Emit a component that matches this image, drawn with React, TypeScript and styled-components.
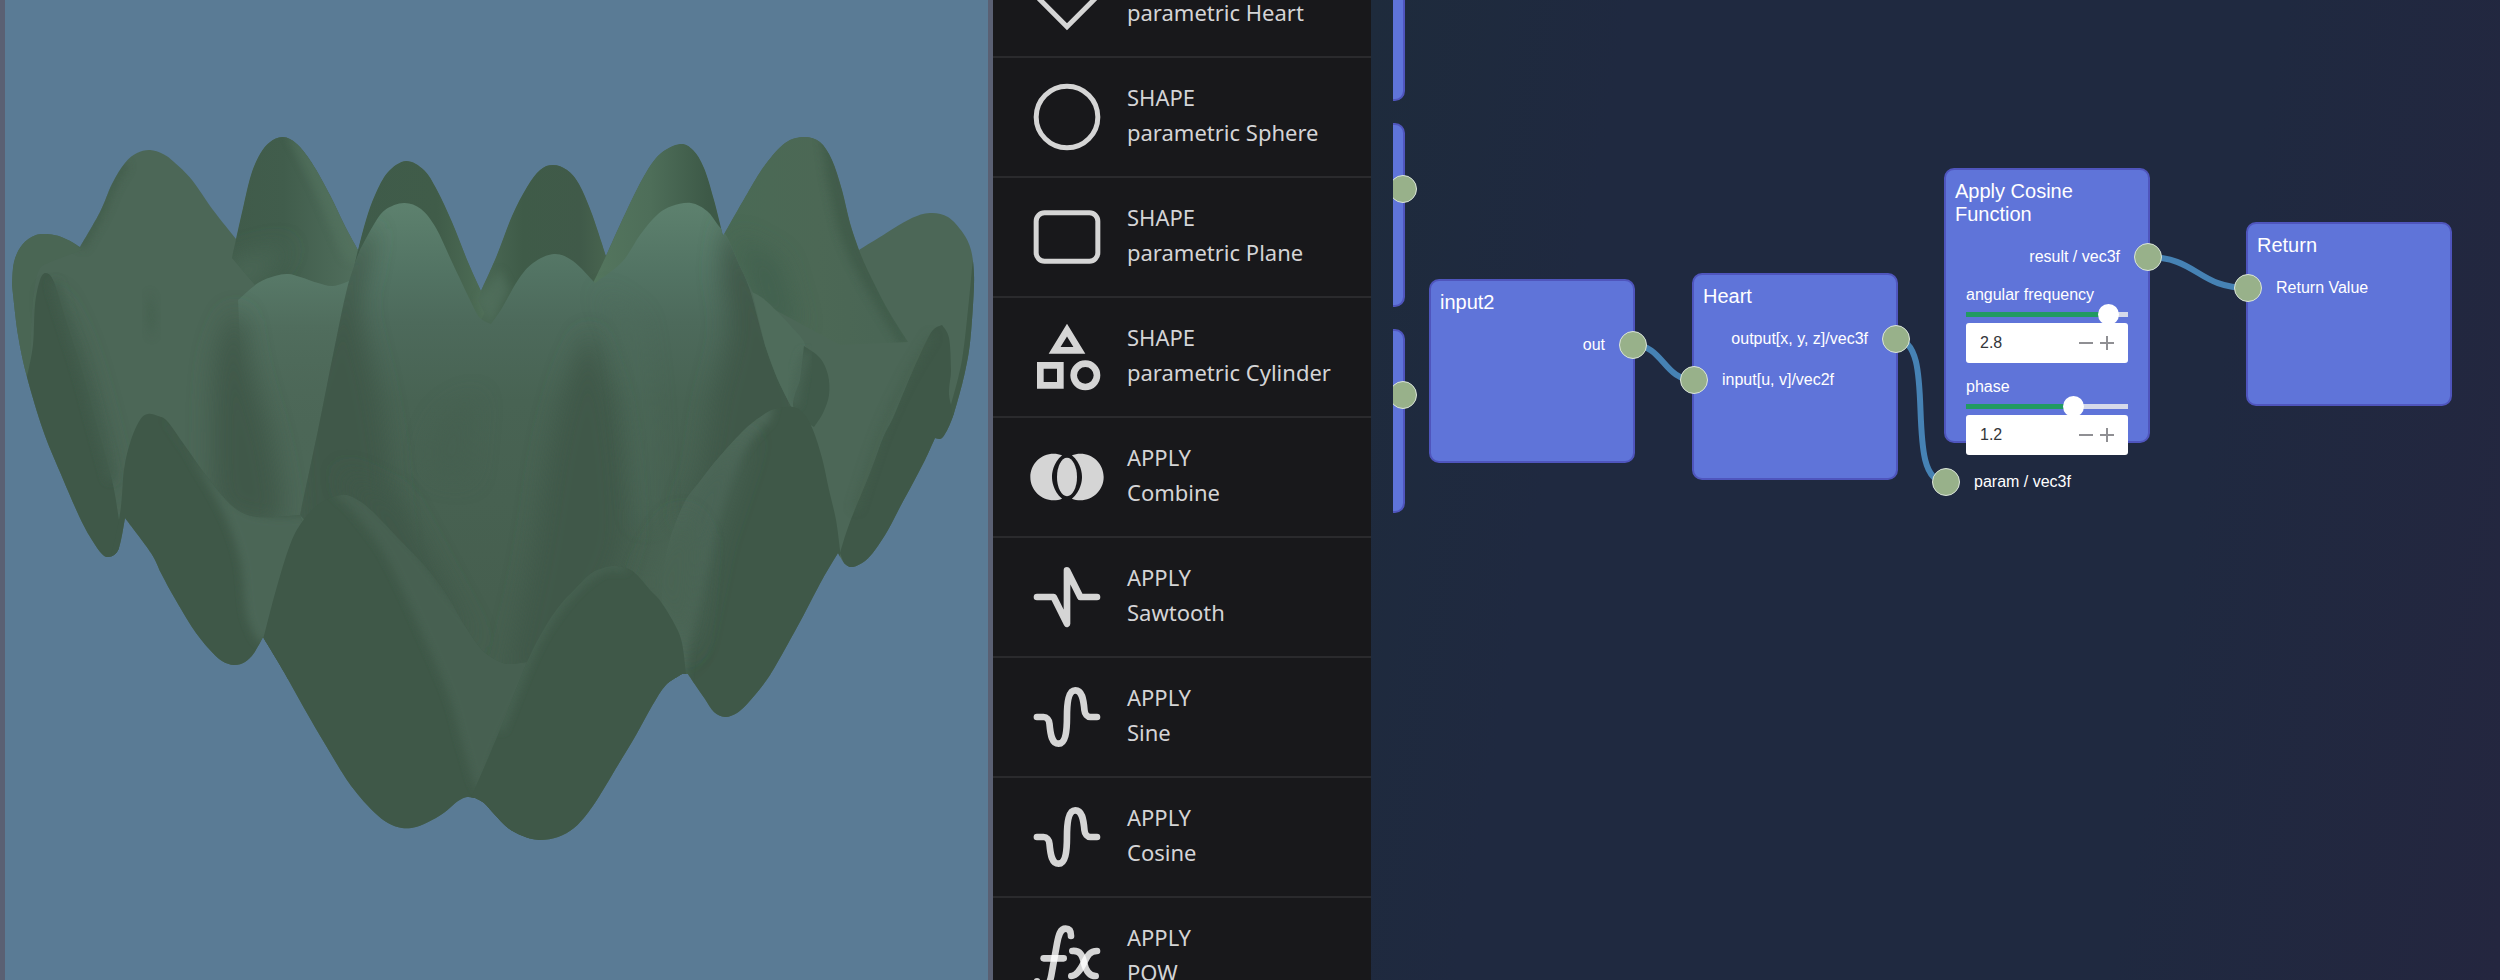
import React, { useState } from "react";
import styled, { createGlobalStyle } from "styled-components";

const GlobalStyle = createGlobalStyle`
  *, *::before, *::after { box-sizing: border-box; }
  body { margin: 0; background: #1e293e; }
`;

const Page = styled.main`
  display: grid;
  grid-template-columns: 993fr 378px 1129fr;
  height: 100vh;
  overflow: hidden;
`;

/* ---------- 3D preview ---------- */

const Preview = styled.section`
  min-width: 0;
  min-height: 0;
  border: solid #5a6073;
  border-width: 0 5px;
  background: #5a7b95;
`;

const Scene = styled.svg`
  display: block;
  width: 100%;
  height: 100%;
`;

type Point = [number, number];

/* Smooth curve through the points; "|" marks a sharp corner. */
function curve(text: string, closed = true): string {
  const runs = text.split("|").map((run) =>
    run
      .trim()
      .split(/\s+/)
      .map((p) => p.split(",").map(Number) as Point)
  );
  let d = "";
  runs.forEach((pts, r) => {
    d += `${r === 0 ? "M" : "L"}${pts[0][0]} ${pts[0][1]}`;
    for (let i = 0; i < pts.length - 1; i++) {
      const a = pts[Math.max(0, i - 1)];
      const b = pts[i];
      const c = pts[i + 1];
      const e = pts[Math.min(pts.length - 1, i + 2)];
      d += `C${b[0] + (c[0] - a[0]) / 6} ${b[1] + (c[1] - a[1]) / 6} ${c[0] - (e[0] - b[0]) / 6} ${
        c[1] - (e[1] - b[1]) / 6
      } ${c[0]} ${c[1]}`;
    }
  });
  return closed ? d + "Z" : d;
}

const outline = curve(
  "12,285 14,262 22,245 36,235 54,235 68,240 80,247 | 80,247 100,212 112,184 125,163 137,153 150,150 163,154 174,162 192,180 213,210 236,239 | " +
    "236,239 243,208 251,175 260,154 270,142 283,137 297,144 312,163 330,195 345,226 358,250 | 358,250 366,220 375,195 388,172 406,161 424,170 437,190 452,222 468,262 481,291 | " +
    "481,291 497,255 512,216 527,187 540,170 553,165 567,170 579,184 592,214 606,256 | 606,256 625,214 644,176 660,154 680,144 693,150 704,168 714,200 723,236 | " +
    "723,236 747,194 765,165 785,143 804,137 820,142 832,160 842,190 850,223 859,250 | 859,250 880,237 910,219 930,213 948,217 963,233 971,250 974,275 973,305 970,343 965,372 957,403 950,424 942,438 935,438 | " +
    "935,438 925,460 913,483 900,507 888,530 875,550 865,561 853,567 845,564 838,553 | 838,553 822,580 801,620 776,665 763,685 748,703 737,713 725,717 714,712 705,699 696,686 688,674 | 682,674 666,685 652,706 636,735 618,765 600,795 587,814 574,828 558,837 539,840 523,836 508,828 495,815 484,803 475,798 | " +
    "475,798 467,797 458,801 445,812 432,820 416,827 402,828 388,823 375,813 360,797 345,777 325,744 304,708 284,672 263,637 | 263,637 254,653 245,662 234,665 222,661 210,650 194,630 174,597 161,573 151,553 125,518 | " +
    "125,518 121,540 117,552 109,557 102,554 92,540 80,518 60,472 43,430 27,377 18,335 12,285"
);

function Flower() {
  return (
    <Scene viewBox="5 0 983 980" preserveAspectRatio="xMidYMid meet" role="img" aria-label="Rendered surface">
      <defs>
        <clipPath id="body"><path d={outline} /></clipPath>
        <clipPath id="front">
          <path d={curve("300,515 318,430 335,345 348,285 360,250 | 360,250 373,226 385,210 404,203 421,209 436,228 452,262 471,302 480,318 491,324 | 491,324 502,308 518,280 533,263 554,254 573,261 595,283 | 595,283 622,262 640,235 657,215 672,206 691,203 707,211 718,225 727,237 738,262 750,290 765,345 778,380 793,410 | 793,410 700,600 560,720 400,620 300,515")} />
        </clipPath>
        <clipPath id="petal1"><path d={curve("100,600 119,520 124,470 131,440 140,420 148,414 158,416 167,421 183,443 205,474 228,502 243,513 258,517 278,517 | 300,515 320,600 263,700 100,700")} /></clipPath>
        <clipPath id="petal2"><path d={curve("263,640 276,590 290,545 302,522 319,504 341,495 356,499 372,511 400,540 425,566 445,592 465,626 482,650 500,662 512,664 527,662 | 600,700 480,900 300,900")} /></clipPath>
        <clipPath id="petal3"><path d={curve("470,800 500,730 527,662 545,627 560,605 574,590 590,574 603,568 614,566 626,568 636,574 650,590 661,602 675,625 682,643 686,674 | 686,900 470,900")} /></clipPath>
        <clipPath id="petal4"><path d={curve("660,640 665,560 682,507 700,481 720,456 745,429 763,415 775,409 793,407 804,414 813,430 822,458 829,490 836,520 840,550 | 840,750 680,750")} /></clipPath>
        <clipPath id="peak2"><path d={curve("232,258 243,208 251,175 260,154 270,142 283,135 297,144 312,163 330,195 345,226 358,250 | 352,275 346,284 333,286 318,283 300,277 288,274 272,277 255,285")} /></clipPath>
        <clipPath id="peak5"><path d={curve("585,300 606,256 625,214 644,176 660,154 680,144 693,150 704,168 714,200 723,236 | 740,300 600,310")} /></clipPath>
        <clipPath id="peak6"><path d={curve("723,236 747,194 765,165 785,143 804,137 820,142 832,160 842,190 850,223 859,250 870,275 888,310 908,342 | 840,345 757,300")} /></clipPath>
        <linearGradient id="g2"><stop offset="0" stopColor="#405b4a" /><stop offset=".4" stopColor="#415d4c" /><stop offset="1" stopColor="#52705e" /></linearGradient>
        <linearGradient id="g3"><stop offset="0" stopColor="#3f5b4a" /><stop offset=".6" stopColor="#405c49" /><stop offset="1" stopColor="#517159" /></linearGradient>
        <linearGradient id="g4"><stop offset="0" stopColor="#4b6955" /><stop offset=".35" stopColor="#3f5b48" /><stop offset=".8" stopColor="#405a49" /><stop offset="1" stopColor="#48644f" /></linearGradient>
        <linearGradient id="g5"><stop offset="0" stopColor="#55775f" /><stop offset=".45" stopColor="#4e6e59" /><stop offset=".85" stopColor="#3d5947" /></linearGradient>
        <linearGradient id="g6"><stop offset="0" stopColor="#4a6a55" /><stop offset=".5" stopColor="#4c6855" /><stop offset=".8" stopColor="#4a6655" /></linearGradient>
        <linearGradient id="gf" x1="0" y1="203" x2="0" y2="600" gradientUnits="userSpaceOnUse">
          <stop offset="0" stopColor="#5d816e" /><stop offset=".18" stopColor="#527363" /><stop offset=".3" stopColor="#4d6a5b" /><stop offset=".5" stopColor="#486353" /><stop offset="1" stopColor="#465f4f" />
        </linearGradient>
        <linearGradient id="g7" x1="0" y1="270" x2="0" y2="460" gradientUnits="userSpaceOnUse">
          <stop offset="0" stopColor="#587a69" /><stop offset=".3" stopColor="#506d5d" /><stop offset="1" stopColor="#4b6555" stopOpacity="0" />
        </linearGradient>
        <filter id="soft" x="-50%" y="-50%" width="200%" height="200%"><feGaussianBlur stdDeviation="12" /></filter>
        <filter id="fine" x="-50%" y="-50%" width="200%" height="200%"><feGaussianBlur stdDeviation="4" /></filter>
      </defs>

      <g clipPath="url(#body)">
        <rect x="0" y="100" width="990" height="760" fill="#4c6757" />

        {/* back row of peaks */}
        <path d={curve("80,247 100,212 112,184 125,163", false)} stroke="#405b49" strokeWidth="10" fill="none" filter="url(#fine)" opacity=".7" />
        <path d={curve("10,290 16,255 36,232 62,235 82,250 | 50,262 38,272 32,310 28,377 10,350")} fill="#4a6654" />
        <g clipPath="url(#peak2)">
          <rect x="230" y="130" width="135" height="170" fill="url(#g2)" />
          <path d={curve("285,130 320,165 375,265 | 345,260 315,190")} fill="#547460" filter="url(#fine)" opacity=".6" />
          <path d="M225 262L290 245L240 300Z" fill="#4c6757" filter="url(#soft)" />
        </g>
        <path d={curve("350,285 358,250 366,220 375,195 388,172 406,161 424,170 437,190 452,222 468,262 481,291 | 495,330 350,330")} fill="url(#g3)" />
        <path d={curve("481,291 497,255 512,216 527,187 540,170 553,163 567,168 579,184 592,214 606,256 | 606,300 491,324 484,312 478,300")} fill="url(#g4)" />
        <path d="M478 300L500 270L510 290L491 325Z" fill="#577663" filter="url(#fine)" opacity=".5" />
        <g clipPath="url(#peak5)"><rect x="585" y="140" width="145" height="180" fill="url(#g5)" /></g>
        <g clipPath="url(#peak6)">
          <rect x="720" y="130" width="195" height="230" fill="url(#g6)" />
          <path d={curve("820,130 838,150 853,210 880,285 912,345 | 900,345 862,282 840,235 826,175")} fill="#3c5846" filter="url(#fine)" opacity=".7" />
          <path d="M735 235L780 260L800 330L760 320Z" fill="#415e4d" filter="url(#soft)" opacity=".7" />
        </g>

        {/* left flank */}
        <path d={curve("50,285 80,350 108,450 119,515 | 105,480 80,410")} fill="#3f5848" filter="url(#soft)" />
        <path d={curve("27,377 33,345 35,305 40,280 46,273 54,282 66,320 82,370 97,425 112,480 119,520 | 119,560 80,570 20,420")} fill="#3f5848" />
        <path d={curve("54,282 66,320 82,370 97,425 112,480", false)} stroke="#435d4d" strokeWidth="9" fill="none" filter="url(#fine)" />
        <path d={curve("150,290 147,315 152,340 | 156,315")} fill="#415b4a" filter="url(#fine)" opacity=".45" />

        {/* second petal from the left */}
        <path d={curve("238,300 258,283 275,276 288,274 300,277 318,283 333,286 352,280 | 352,300 320,450 245,450")} fill="url(#g7)" />
        <path d={curve("235,310 218,350 212,420 216,500 240,520 280,520 274,450 252,370 243,320")} fill="#3f5848" filter="url(#soft)" />

        {/* centre */}
        <g clipPath="url(#front)">
          <rect x="290" y="190" width="520" height="540" fill="url(#gf)" />
          <path d={curve("352,250 372,228 366,270 360,310 376,380 388,450 400,560 420,600 | 300,560 290,420")} fill="#3f5848" filter="url(#soft)" />
          <path d={curve("730,215 722,270 728,330 712,400 700,470 680,520 | 760,500 810,420 790,340")} fill="#3f5848" filter="url(#soft)" />
          <path d={curve("590,330 568,380 550,450 532,560 505,680 | 560,670 620,560 624,480 614,400")} fill="#3f5848" filter="url(#soft)" />
          <path d={curve("478,395 440,420 430,470 470,480")} fill="#455e4f" filter="url(#soft)" opacity=".5" />
          <path d="M340 470L400 500L480 650L400 580Z" fill="#3f5848" filter="url(#soft)" />
        </g>
        <path d={curve("600,290 622,340 632,420 640,520 | 655,520 650,400 640,320")} fill="#4f6d5d" filter="url(#soft)" opacity=".5" />

        {/* right folds */}
        <path d={curve("752,292 765,300 790,325 806,348 800,385 812,428 | 793,410 778,380 765,345")} fill="#4f6c5b" />
        <path d={curve("804,346 820,358 828,375 829,395 823,413 814,427 | 803,420 793,405 800,380")} fill="#405a4a" />
        <path d={curve("806,352 798,380 794,405", false)} stroke="#496554" strokeWidth="8" fill="none" filter="url(#fine)" />
        <path d={curve("942,325 934,329 927,340 914,368 903,394 893,418 883,438 870,473 850,522 840,553 | 850,580 980,470 951,405 951,370 949,338 942,325")} fill="#3f5848" />
        <path d={curve("978,230 973,260 969,300 962,360 951,405 | 955,445 990,400")} fill="#405a49" />
        <path d={curve("932,335 905,380 880,435 855,510", false)} stroke="#445e4e" strokeWidth="8" fill="none" filter="url(#fine)" opacity=".6" />

        {/* lower petals */}
        <g clipPath="url(#petal4)">
          <rect x="640" y="400" width="210" height="360" fill="#3f5848" />
          <path d={curve("640,640 660,540 720,440 775,400 | 770,420 745,450 722,500 705,570 690,640 684,690")} fill="#4d6858" filter="url(#fine)" />
          <path d={curve("680,530 700,480 750,435 | 715,540 690,660")} fill="#496454" filter="url(#soft)" />
        </g>
        <path d={curve("683,515 660,545 645,590 682,640 686,672 | 695,600 700,540")} fill="#496353" filter="url(#soft)" />
        <g clipPath="url(#petal1)">
          <rect x="100" y="400" width="230" height="300" fill="#3f5848" />
          <path d={curve("158,414 205,470 250,512 310,515 | 300,560 268,640 248,620 240,560 222,510 190,455")} fill="#4b6656" filter="url(#fine)" />
        </g>
        <g clipPath="url(#petal2)">
          <rect x="250" y="480" width="370" height="400" fill="#3f5848" />
          <path d={curve("330,490 360,494 410,545 470,620 520,655 | 540,660 500,740 480,790 464,750 450,700 425,640 385,555 350,508")} fill="#476151" filter="url(#fine)" />
        </g>
        <g clipPath="url(#petal3)">
          <rect x="460" y="560" width="240" height="300" fill="#3f5848" />
          <path d={curve("500,730 527,662 545,627 574,590 603,568 626,568", false)} stroke="#4a6554" strokeWidth="6" fill="none" filter="url(#fine)" />
        </g>
      </g>
    </Scene>
  );
}

/* ---------- node palette ---------- */

const Palette = styled.nav`
  min-height: 0;
  overflow: hidden;
  background: #18181b;
`;

/* scrolled part of the way down the list */
const PaletteList = styled.ul`
  list-style: none;
  margin: -62px 0 0;
  padding: 0;
`;

const PaletteItem = styled.button`
  display: flex;
  align-items: center;
  gap: 20px;
  width: 100%;
  height: 120px;
  padding: 0 0 0 34px;
  border: 0;
  border-bottom: 2px solid #2a2a2d;
  background: transparent;
  color: #d4d4d6;
  text-align: left;
  cursor: pointer;
`;

const ItemText = styled.span`
  display: flex;
  flex-direction: column;
  padding-bottom: 4px;
  font: 22px/35px "Noto Sans", "Segoe UI", sans-serif;
`;

const ItemIcon = styled.svg`
  flex: none;
  width: 80px;
  height: 80px;
  fill: none;
  stroke: rgba(255, 255, 255, 0.82);
  stroke-linecap: round;
  stroke-linejoin: round;
`;

const sine = (
  <path strokeWidth="2" d="M21 12h-2c-.894 0-1.662-.857-1.761-2-.296-3.45-.749-6-2.749-6s-2.5 3.582-2.5 8-.5 8-2.5 8-2.452-2.547-2.749-6c-.1-1.147-.867-2-1.763-2h-2" />
);

const solid = { fill: "rgba(255,255,255,0.82)", stroke: "none" };

const icons: Record<string, React.ReactNode> = {
  heart: <path strokeWidth="1.5" strokeLinejoin="miter" d="M12 20.9l-8-8a5.2 5.2 0 0 1 7.4-7.4l.6.6.6-.6a5.2 5.2 0 0 1 7.4 7.4z" />,
  circle: <circle cx="12" cy="12" r="9.25" strokeWidth="1.5" />,
  plane: <rect x="2.75" y="4.75" width="18.5" height="14.5" rx="2.5" strokeWidth="1.5" />,
  category: (
    <path {...solid} fillRule="evenodd" d="M12 2l-5.5 9h11L12 2zm0 3.84L13.93 9h-3.87L12 5.84zM17.5 13a4.5 4.5 0 1 0 0 9 4.5 4.5 0 0 0 0-9zm0 7a2.5 2.5 0 0 1 0-5 2.5 2.5 0 0 1 0 5zM3 21.5h8v-8H3v8zm2-6h4v4H5v-4z" />
  ),
  combine: (
    <g {...solid}>
      <ellipse cx="12" cy="12" rx="3" ry="5.74" />
      <path d="M7.5 12c0-.97.23-4.16 3.03-6.5C9.75 5.19 8.9 5 8 5c-3.86 0-7 3.14-7 7s3.14 7 7 7c.9 0 1.75-.19 2.53-.5C7.73 16.16 7.5 12.97 7.5 12zM16 5c-.9 0-1.75.19-2.53.5 2.8 2.34 3.03 5.53 3.03 6.5s-.23 4.16-3.03 6.5c.78.31 1.63.5 2.53.5 3.86 0 7-3.14 7-7s-3.14-7-7-7z" />
    </g>
  ),
  saw: <path strokeWidth="2" d="M3 12h5l4 8V4l4 8h5" />,
  sine,
  fx: (
    <g strokeWidth="2">
      <path d="M3 19.3C3 20.4 3.7 21 4.6 21 6.4 21 6.9 19.5 7.3 17.5L9 8C9.5 5.2 10 3.5 11.6 3.5 12.7 3.5 13.2 4.3 13.2 5.7" />
      <path d="M5 12.4h6" />
      <path d="M13.6 10.2C16 10 16.6 11.5 17.1 13.7S18.500 17.700 20.600 17.700" />
      <path d="M21 10.2C18.6 10.2 18 12 17.1 13.7S15 17.700 13.300 17.700" />
    </g>
  ),
};

const palette = [
  { kind: "SHAPE", name: "parametric Heart", icon: "heart" },
  { kind: "SHAPE", name: "parametric Sphere", icon: "circle" },
  { kind: "SHAPE", name: "parametric Plane", icon: "plane" },
  { kind: "SHAPE", name: "parametric Cylinder", icon: "category" },
  { kind: "APPLY", name: "Combine", icon: "combine" },
  { kind: "APPLY", name: "Sawtooth", icon: "saw" },
  { kind: "APPLY", name: "Sine", icon: "sine" },
  { kind: "APPLY", name: "Cosine", icon: "sine" },
  { kind: "APPLY", name: "POW", icon: "fx" },
];

/* ---------- graph editor ---------- */

const Editor = styled.section`
  display: flex;
  min-width: 0;
  padding-left: 22px;
  background: linear-gradient(100deg, #1e2b3c 0%, #1f2940 20%, #1f2940 70%, #24263f 100%);
`;

const Canvas = styled.div`
  position: relative;
  flex: 1;
  min-width: 0;
  overflow: hidden;
  font-family: "Liberation Sans", Arial, sans-serif;
`;

const Wires = styled.svg`
  position: absolute;
  inset: 0;
  width: 100%;
  height: 100%;
  fill: none;
  stroke: #4682b4;
  stroke-width: 6px;
`;

const NodeBox = styled.article<{ $x: number; $y: number; $h: number }>`
  position: absolute;
  left: ${(p) => p.$x}px;
  top: ${(p) => p.$y}px;
  width: 206px;
  height: ${(p) => p.$h}px;
  border: 2px solid #4f55bd;
  border-radius: 10px;
  background: #5f74d9;
  color: #fff;
`;

const NodeTitle = styled.h2`
  margin: 0;
  padding: 10px 9px;
  font-size: 20px;
  font-weight: 400;
  line-height: 23px;
`;

const Port = styled.div<{ $out?: boolean }>`
  display: flex;
  flex-direction: ${(p) => (p.$out ? "row-reverse" : "row")};
  align-items: center;
  gap: 14px;
  height: 41px;
  margin: 0 -14px;
  font-size: 16px;
  line-height: 20px;
`;

const Socket = styled.button`
  flex: none;
  width: 28px;
  height: 28px;
  padding: 0;
  border: 1px solid #dbe5da;
  border-radius: 50%;
  background: #98b18a;
  cursor: pointer;
`;

const Controls = styled.div`
  display: flex;
  flex-direction: column;
  gap: 14px;
  padding: 8px 20px 6px;
`;

const Control = styled.div`
  display: flex;
  flex-direction: column;
`;

const ControlLabel = styled.label`
  font-size: 16px;
  line-height: 20px;
`;

const Slider = styled.input<{ $fill: number }>`
  appearance: none;
  width: 100%;
  height: 18px;
  margin: 0;
  background: linear-gradient(90deg, #219a61 ${(p) => p.$fill}%, #d5d9ea ${(p) => p.$fill}%) center / 100% 5px no-repeat;
  cursor: pointer;
  &::-webkit-slider-thumb {
    appearance: none;
    width: 21px;
    height: 21px;
    border-radius: 50%;
    background: #fff;
  }
`;

const NumberField = styled.div`
  display: flex;
  align-items: center;
  height: 40px;
  padding: 0 11px 0 14px;
  border-radius: 3px;
  background: #fff;
`;

const NumberInput = styled.input`
  flex: 1;
  min-width: 0;
  padding: 0;
  border: 0;
  outline: 0;
  background: transparent;
  color: #333639;
  font: 16px/20px "Liberation Sans", Arial, sans-serif;
`;

const StepButton = styled.button`
  display: grid;
  place-items: center;
  width: 21px;
  height: 21px;
  padding: 0;
  border: 0;
  background: transparent;
  cursor: pointer;
  svg { width: 14px; height: 14px; stroke: #8f8f93; stroke-width: 2; }
`;

interface Param { label: string; value: number; min: number; max: number }

function ParamControl({ label, value, min, max }: Param) {
  const [current, setCurrent] = useState(value);
  const id = label.replace(" ", "-");
  const step = (by: number) => setCurrent((v) => Math.min(max, Math.max(min, Number((v + by).toFixed(1)))));
  return (
    <Control>
      <ControlLabel htmlFor={id}>{label}</ControlLabel>
      <Slider
        type="range"
        aria-label={`${label} slider`}
        min={min}
        max={max}
        step={0.01}
        value={current}
        $fill={((current - min) / (max - min)) * 100}
        onChange={(e) => setCurrent(Number(e.target.value))}
      />
      <NumberField>
        <NumberInput id={id} value={current} onChange={(e) => setCurrent(Number(e.target.value) || 0)} />
        <StepButton type="button" aria-label={`Decrease ${label}`} onClick={() => step(-0.1)}>
          <svg viewBox="0 0 14 14"><path d="M0 7h14" /></svg>
        </StepButton>
        <StepButton type="button" aria-label={`Increase ${label}`} onClick={() => step(0.1)}>
          <svg viewBox="0 0 14 14"><path d="M0 7h14M7 0v14" /></svg>
        </StepButton>
      </NumberField>
    </Control>
  );
}

interface GraphNode {
  id: string;
  title?: string;
  x: number;
  y: number;
  height: number;
  outputs?: string[];
  params?: Param[];
  inputs?: string[];
}

const nodes: GraphNode[] = [
  { id: "a", x: -194, y: -83, height: 184 },
  { id: "b", x: -194, y: 123, height: 184, outputs: [""] },
  { id: "c", x: -194, y: 329, height: 184, outputs: [""] },
  { id: "input2", title: "input2", x: 36, y: 279, height: 184, outputs: ["out"] },
  { id: "heart", title: "Heart", x: 299, y: 273, height: 207, outputs: ["output[x, y, z]/vec3f"], inputs: ["input[u, v]/vec2f"] },
  {
    id: "cosine",
    title: "Apply Cosine Function",
    x: 551,
    y: 168,
    height: 275,
    outputs: ["result / vec3f"],
    params: [
      { label: "angular frequency", value: 2.8, min: 0, max: 3 },
      { label: "phase", value: 1.2, min: -3.14, max: 3.14 },
    ],
    inputs: ["param / vec3f"],
  },
  { id: "return", title: "Return", x: 853, y: 222, height: 184, inputs: ["Return Value"] },
];

const wires = [
  [240, 345, 301, 380],
  [502, 339, 553, 482],
  [754, 257, 855, 288],
];

function wirePath([x1, y1, x2, y2]: number[]) {
  const reach = Math.max((x2 - x1) / 2, Math.abs(y2 - y1) * 0.32);
  return `M${x1} ${y1}C${x1 + reach} ${y1} ${x2 - reach} ${y2} ${x2} ${y2}`;
}

export default function App() {
  return (
    <>
      <GlobalStyle />
      <Page>
        <Preview><Flower /></Preview>
        <Palette aria-label="Nodes">
          <PaletteList>
            {palette.map((item) => (
              <li key={item.name}>
                <PaletteItem type="button">
                  <ItemIcon viewBox="0 0 24 24" aria-hidden="true">{icons[item.icon]}</ItemIcon>
                  <ItemText>
                    <span>{item.kind}</span>
                    <span>{item.name}</span>
                  </ItemText>
                </PaletteItem>
              </li>
            ))}
          </PaletteList>
        </Palette>
        <Editor>
          <Canvas>
            <Wires aria-hidden="true">
              {wires.map((w) => <path key={w.join()} d={wirePath(w)} />)}
            </Wires>
            {nodes.map((node) => (
              <NodeBox key={node.id} $x={node.x} $y={node.y} $h={node.height}>
                <NodeTitle>{node.title ?? "\u00a0"}</NodeTitle>
                {node.outputs?.map((name) => (
                  <Port key={name} $out><Socket type="button" aria-label={`${name || node.id} socket`} />{name}</Port>
                ))}
                {node.params && (
                  <Controls>{node.params.map((p) => <ParamControl key={p.label} {...p} />)}</Controls>
                )}
                {node.inputs?.map((name) => (
                  <Port key={name}><Socket type="button" aria-label={`${name} socket`} />{name}</Port>
                ))}
              </NodeBox>
            ))}
          </Canvas>
        </Editor>
      </Page>
    </>
  );
}
